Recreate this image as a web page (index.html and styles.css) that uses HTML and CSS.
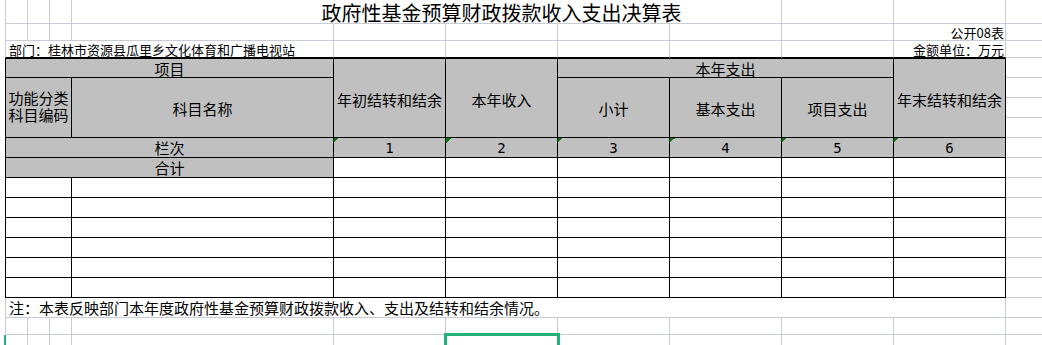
FILE: index.html
```html
<!DOCTYPE html>
<html lang="zh-CN">
<head>
<meta charset="utf-8">
<title>政府性基金预算财政拨款收入支出决算表</title>
<link rel="stylesheet" href="styles.css">
</head>
<body>
<div class="sheet">
  <!-- row 1 -->
  <div class="c f"></div><div class="c"></div><div class="c"></div>
  <div class="c title s5">政府性基金预算财政拨款收入支出决算表</div>
  <div class="c"></div><div class="c"></div><div class="c"></div>
  <!-- row 2 -->
  <div class="c f"></div><div class="c"></div><div class="c"></div><div class="c"></div>
  <div class="c"></div><div class="c"></div><div class="c"></div><div class="c"></div><div class="c"></div>
  <div class="c small right">公开08表</div>
  <div class="c"></div>
  <!-- row 3 -->
  <div class="c f bb s4 small left">部门：桂林市资源县瓜里乡文化体育和广播电视站</div>
  <div class="c bb"></div><div class="c bb"></div><div class="c bb"></div><div class="c bb"></div><div class="c bb"></div>
  <div class="c bb small right">金额单位：万元</div>
  <div class="c"></div>
  <!-- row 4 -->
  <div class="c f t top h s4">项目</div>
  <div class="c t top h rs4 mid">年初结转和结余</div>
  <div class="c t top h rs4 mid">本年收入</div>
  <div class="c t top h s3">本年支出</div>
  <div class="c t top h rs4 mid">年末结转和结余</div>
  <div class="c"></div>
  <!-- row 5-7 -->
  <div class="c f t h s3 rs3 two"><span class="ln">功能分类</span><span class="ln">科目编码</span></div>
  <div class="c t h rs3">科目名称</div>
  <div class="c t h rs3">小计</div>
  <div class="c t h rs3">基本支出</div>
  <div class="c t h rs3">项目支出</div>
  <div class="c"></div>
  <div class="c"></div>
  <div class="c"></div>
  <!-- row 8 -->
  <div class="c f t h s4">栏次</div>
  <div class="c t h num mark">1</div>
  <div class="c t h num mark">2</div>
  <div class="c t h num mark">3</div>
  <div class="c t h num mark">4</div>
  <div class="c t h num mark">5</div>
  <div class="c t h num mark">6</div>
  <div class="c"></div>
  <!-- row 9 -->
  <div class="c f t h s4">合计</div>
  <div class="c t"></div><div class="c t"></div><div class="c t"></div><div class="c t"></div><div class="c t"></div><div class="c t"></div>
  <div class="c"></div>
  <!-- rows 10-15 -->
  <div class="c f t s3"></div><div class="c t"></div><div class="c t"></div><div class="c t"></div><div class="c t"></div><div class="c t"></div><div class="c t"></div><div class="c t"></div><div class="c"></div>
  <div class="c f t s3"></div><div class="c t"></div><div class="c t"></div><div class="c t"></div><div class="c t"></div><div class="c t"></div><div class="c t"></div><div class="c t"></div><div class="c"></div>
  <div class="c f t s3"></div><div class="c t"></div><div class="c t"></div><div class="c t"></div><div class="c t"></div><div class="c t"></div><div class="c t"></div><div class="c t"></div><div class="c"></div>
  <div class="c f t s3"></div><div class="c t"></div><div class="c t"></div><div class="c t"></div><div class="c t"></div><div class="c t"></div><div class="c t"></div><div class="c t"></div><div class="c"></div>
  <div class="c f t s3"></div><div class="c t"></div><div class="c t"></div><div class="c t"></div><div class="c t"></div><div class="c t"></div><div class="c t"></div><div class="c t"></div><div class="c"></div>
  <div class="c f t s3"></div><div class="c t"></div><div class="c t"></div><div class="c t"></div><div class="c t"></div><div class="c t"></div><div class="c t"></div><div class="c t"></div><div class="c"></div>
  <!-- row 16 note -->
  <div class="c f s10 left note">注：本表反映部门本年度政府性基金预算财政拨款收入、支出及结转和结余情况。</div>
  <div class="c"></div>
  <!-- row 17 -->
  <div class="c f"></div><div class="c"></div><div class="c"></div><div class="c"></div><div class="c"></div><div class="c"></div><div class="c"></div><div class="c"></div><div class="c"></div><div class="c"></div><div class="c"></div>
  <!-- row 18 -->
  <div class="c f rowsel"></div><div class="c"></div><div class="c"></div><div class="c"></div><div class="c"></div>
  <div class="c sel"></div>
  <div class="c"></div><div class="c"></div><div class="c"></div><div class="c"></div><div class="c"></div>
</div>
</body>
</html>
```

FILE: styles.css
```css
html, body {
  margin: 0;
  padding: 0;
  background: #ffffff;
  overflow: hidden;
}

body {
  font-family: "Noto Sans CJK SC", "Noto Sans", sans-serif;
  color: #000000;
}

.sheet {
  --grid: #c8ccd6;
  display: grid;
  grid-template-columns: 23px 22px 22px 262px repeat(6, 112px) 60px;
  grid-template-rows: 24px 17px 17px repeat(13, 20px) 17px 20px;
  margin-left: 5px;
  width: max-content;
}

.c {
  box-sizing: border-box;
  border-right: 1px solid var(--grid);
  border-bottom: 1px solid var(--grid);
  display: flex;
  align-items: center;
  justify-content: center;
  text-align: center;
  font-size: 15px;
  line-height: 17px;
  white-space: nowrap;
  position: relative;
}

.f { border-left: 1px solid var(--grid); }

.t {
  border-right-color: #000000;
  border-bottom-color: #000000;
}
.t.f { border-left-color: #000000; }

.top { border-top: 1px solid #000000; }
.bb { border-bottom-color: #000000; }

.h { background: #c0c0c0; }

.s3 { grid-column: span 3; }
.s4 { grid-column: span 4; }
.s5 { grid-column: span 5; }
.s10 { grid-column: span 10; }
.rs3 { grid-row: span 3; }
.rs4 { grid-row: span 4; }

.rs3 { padding-top: 2px; }
.mid { padding-top: 3px; }

.two {
  flex-direction: column;
  padding-top: 0;
  gap: 1px;
  font-family: "Liberation Sans", "Noto Sans CJK SC", sans-serif;
}
.ln {
  display: block;
  line-height: 16px;
  height: 16px;
}

.title {
  font-size: 20px;
  line-height: 20px;
  padding-left: 150px;
  padding-top: 3px;
  align-items: center;
}

.small {
  font-size: 13px;
  line-height: 15px;
  align-items: flex-end;
}

.right {
  justify-content: flex-end;
  padding-right: 1px;
}

.left {
  justify-content: flex-start;
  padding-left: 3px;
}

.note {
  font-size: 15px;
}

.num {
  font-family: "DejaVu Sans Mono", "Liberation Mono", monospace;
  font-size: 14px;
  padding-top: 2px;
}

.mark::before {
  content: "";
  position: absolute;
  top: 0;
  left: 0;
  width: 5px;
  height: 5px;
  background: linear-gradient(to bottom right, #0c7d0c 50%, transparent 50%);
}

.sel {
  outline: 3px solid #21b27b;
  outline-offset: -1px;
  z-index: 1;
}

.rowsel {
  border-left-color: #21b27b;
  box-shadow: -1px 0 0 #21b27b;
}
```
